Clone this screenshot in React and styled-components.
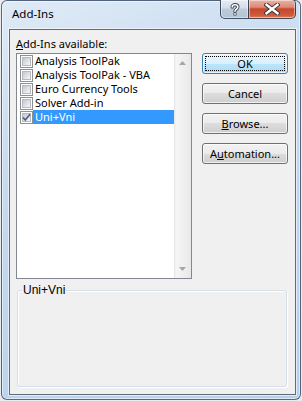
import React from 'react';
import styled, { createGlobalStyle, css } from 'styled-components';

const GlobalStyle = createGlobalStyle`
  html, body {
    margin: 0;
    padding: 0;
    background: #e9ecef;
  }
  body {
    font-family: "Noto Sans", "Liberation Sans", sans-serif;
    font-size: 11px;
  }
`;

const Window = styled.div`
  box-sizing: border-box;
  width: 300px;
  height: 400px;
  margin-left: 1px;
  display: flex;
  flex-direction: column;
  border: 1px solid rgba(45, 62, 84, 0.75);
  border-radius: 6px;
  background: linear-gradient(160deg, #dfeaf6 0%, #c6daf0 35%, #b6d0ec 100%);
  box-shadow: inset 0 0 0 1px rgba(255, 255, 255, 0.55);
`;

const TitleBar = styled.div`
  height: 28px;
  display: flex;
  align-items: flex-start;
  justify-content: space-between;
  padding-left: 10px;
`;

const Title = styled.span`
  margin-top: 6px;
  color: #000;
  font-size: 11.5px;
  line-height: 14px;
`;

const CaptionButtons = styled.div`
  display: flex;
  margin-top: -1px;
  margin-right: 4px;
`;

const captionBase = css`
  box-sizing: border-box;
  height: 19px;
  display: flex;
  align-items: center;
  justify-content: center;
  border: 1px solid rgba(40, 55, 75, 0.85);
  border-top: none;
  box-shadow: inset 0 0 0 1px rgba(255, 255, 255, 0.45);
`;

const HelpButton = styled.div`
  ${captionBase}
  width: 28px;
  border-right: none;
  border-bottom-left-radius: 5px;
  background: linear-gradient(#e6edf4 0%, #d3dde8 45%, #bccbdb 50%, #b3c4d6 100%);
`;

const CloseButton = styled.div`
  ${captionBase}
  width: 48px;
  border-bottom-right-radius: 5px;
  border-top-right-radius: 4px;
  background: linear-gradient(#eab3a5 0%, #dc8a74 40%, #c7472f 50%, #cf5a38 85%, #e0815a 100%);
`;

const Client = styled.div`
  flex: 1;
  margin: 0 4px 4px 7px;
  display: flex;
  flex-direction: column;
  padding: 7px 7px 7px 6px;
  background: #f0f0f0;
  border: 1px solid #5c6a7a;
  box-shadow: 0 0 0 1px rgba(255, 255, 255, 0.6);
`;

const Top = styled.div`
  display: grid;
  grid-template-columns: 176px 86px;
  grid-template-rows: 14px 226px;
  column-gap: 10px;
  row-gap: 2px;
`;

const FieldLabel = styled.div`
  grid-column: 1;
  grid-row: 1;
  line-height: 14px;
  color: #000;
`;

const ListBox = styled.div`
  grid-column: 1;
  grid-row: 2;
  box-sizing: border-box;
  display: flex;
  border: 1px solid #828790;
  background: #fff;
`;

const Items = styled.div`
  flex: 1;
  display: flex;
  flex-direction: column;
  padding-left: 3px;
`;

const Item = styled.div`
  height: 14px;
  display: flex;
  align-items: center;
`;

const Box = styled.span`
  box-sizing: border-box;
  width: 13px;
  height: 13px;
  flex: none;
  display: flex;
  align-items: center;
  justify-content: center;
  border: 1px solid #8e8f8f;
  background: #fff;
  padding: 1px;
`;

const BoxInner = styled.span`
  box-sizing: border-box;
  width: 9px;
  height: 9px;
  display: flex;
  align-items: center;
  justify-content: center;
  background: linear-gradient(135deg, #c3c7cd 0%, #e2e4e7 60%, #f6f6f6 100%);
  border: 1px solid #b6babf;
`;

const ItemText = styled.span`
  flex: 1;
  height: 14px;
  line-height: 14px;
  padding-left: 2px;
  white-space: nowrap;
  color: ${({ selected }) => (selected ? '#fff' : '#000')};
  background: ${({ selected }) => (selected ? '#3399ff' : 'transparent')};
`;

const ScrollBar = styled.div`
  width: 17px;
  display: flex;
  flex-direction: column;
  justify-content: space-between;
  align-items: center;
  padding: 7px 0;
  background: linear-gradient(to right, #e3e3e3 0, #f6f6f6 2px, #efefef 60%, #e8e8e8 100%);
`;

const Arrow = styled.svg`
  display: block;
`;

const Buttons = styled.div`
  grid-column: 2;
  grid-row: 2;
  display: flex;
  flex-direction: column;
  gap: 9px;
`;

const Button = styled.div`
  box-sizing: border-box;
  height: 21px;
  display: flex;
  align-items: center;
  justify-content: center;
  border-radius: 3px;
  color: #000;
  line-height: 14px;
  border: 1px solid ${({ primary }) => (primary ? '#3c7fb1' : '#707070')};
  background: ${({ primary }) =>
    primary
      ? 'linear-gradient(#eaf6fd 0%, #d9f0fc 50%, #bee6fd 50%, #a7d9f5 100%)'
      : 'linear-gradient(#f2f2f2 0%, #ebebeb 50%, #dddddd 50%, #cfcfcf 100%)'};
  box-shadow: inset 0 0 0 1px rgba(255, 255, 255, 0.7);
  ${({ primary }) =>
    primary &&
    css`
      outline: 1px dotted #000;
      outline-offset: -4px;
    `}
`;

const Group = styled.div`
  flex: 1;
  position: relative;
  margin: 11px 1px 0;
  border: 1px solid #d5dfe5;
  border-radius: 3px;
  box-shadow: inset 1px 1px 0 #fff, 1px 1px 0 #fff;
`;

const Legend = styled.span`
  position: absolute;
  top: -8px;
  left: 4px;
  padding: 0 1px;
  background: #f0f0f0;
  font-family: "Liberation Sans", Arial, sans-serif;
  font-size: 12px;
  line-height: 14px;
  color: #000;
`;

const addIns = [
  { name: 'Analysis ToolPak', checked: false },
  { name: 'Analysis ToolPak - VBA', checked: false },
  { name: 'Euro Currency Tools', checked: false },
  { name: 'Solver Add-in', checked: false },
  { name: 'Uni+Vni', checked: true },
];

const HelpIcon = () => (
  <svg width="10" height="13" viewBox="0 0 10 13">
    <path d="M2.2 4 C2.2 1 7.8 1 7.8 4 C7.8 6.2 5 6 5 8.3" fill="none" stroke="#3b4452" strokeWidth="3.4" strokeLinecap="round" />
    <circle cx="5" cy="11" r="1.7" fill="#3b4452" />
    <path d="M2.2 4 C2.2 1 7.8 1 7.8 4 C7.8 6.2 5 6 5 8.3" fill="none" stroke="#fff" strokeWidth="1.6" strokeLinecap="round" />
    <circle cx="5" cy="11" r="0.9" fill="#fff" />
  </svg>
);

const CloseIcon = () => (
  <svg width="16" height="12" viewBox="0 0 16 12">
    <path d="M2.5 1.8 L13.5 10.2 M13.5 1.8 L2.5 10.2" stroke="#3b3b3b" strokeWidth="4.4" strokeLinecap="square" />
    <path d="M2.5 1.8 L13.5 10.2 M13.5 1.8 L2.5 10.2" stroke="#fff" strokeWidth="2.4" strokeLinecap="square" />
  </svg>
);

const CheckBox = ({ checked }) => (
  <Box>
    <BoxInner>
      {checked && (
        <svg width="9" height="9" viewBox="0 0 9 9" style={{ margin: -1 }}>
          <path d="M1 4.5 L3.3 7 L8 1.2" fill="none" stroke="#4a5a8a" strokeWidth="1.6" />
        </svg>
      )}
    </BoxInner>
  </Box>
);

const App = () => (
  <>
    <GlobalStyle />
    <Window>
      <TitleBar>
        <Title>Add-Ins</Title>
        <CaptionButtons>
          <HelpButton>
            <HelpIcon />
          </HelpButton>
          <CloseButton>
            <CloseIcon />
          </CloseButton>
        </CaptionButtons>
      </TitleBar>
      <Client>
        <Top>
          <FieldLabel>
            <u>A</u>dd-Ins available:
          </FieldLabel>
          <ListBox>
            <Items>
              {addIns.map((item) => (
                <Item key={item.name}>
                  <CheckBox checked={item.checked} />
                  <ItemText selected={item.checked}>{item.name}</ItemText>
                </Item>
              ))}
            </Items>
            <ScrollBar>
              <Arrow width="7" height="4" viewBox="0 0 7 4">
                <path d="M0 4 L3.5 0 L7 4 Z" fill="#a6a6a6" />
              </Arrow>
              <Arrow width="7" height="4" viewBox="0 0 7 4">
                <path d="M0 0 L7 0 L3.5 4 Z" fill="#a6a6a6" />
              </Arrow>
            </ScrollBar>
          </ListBox>
          <Buttons>
            <Button primary>OK</Button>
            <Button>Cancel</Button>
            <Button>
              <u>B</u>rowse...
            </Button>
            <Button>
              A<u>u</u>tomation...
            </Button>
          </Buttons>
        </Top>
        <Group>
          <Legend>Uni+Vni</Legend>
        </Group>
      </Client>
    </Window>
  </>
);

export default App;
